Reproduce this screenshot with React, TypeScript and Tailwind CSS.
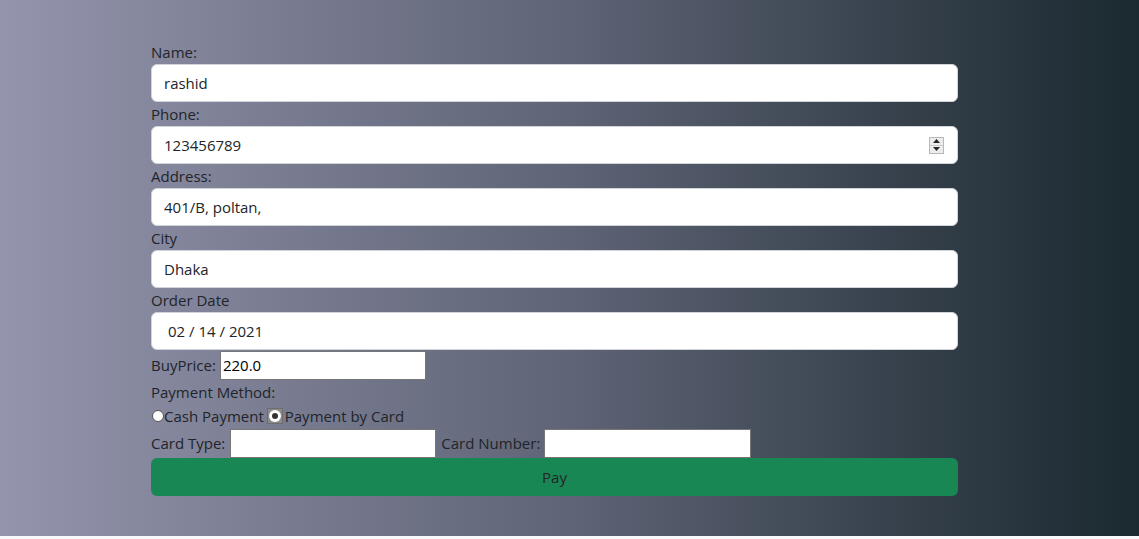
import React from 'react';

const font = { fontFamily: '"Open Sans", "Noto Sans", sans-serif' };

function Field({ label, value, children }: { label: string; value: string; children?: React.ReactNode }) {
  return (
    <div>
      <div className="h-6 text-[15px] leading-6 text-[#212529]">{label}</div>
      <div className="h-[38px] rounded-[6px] border border-[#ced4da] bg-white px-3 flex items-center justify-between text-[15px] text-[#212529]">
        <span>{value}</span>
        {children}
      </div>
    </div>
  );
}

function Spinner() {
  return (
    <div className="w-[15px] h-[17px] mr-[1px] border border-[#b8b8b8] bg-[#ececec] flex flex-col">
      <div className="flex-1 flex items-center justify-center border-b border-[#c8c8c8]">
        <svg width="7" height="4" viewBox="0 0 7 4"><path d="M0 4 L3.5 0 L7 4 Z" fill="#222" /></svg>
      </div>
      <div className="flex-1 flex items-center justify-center">
        <svg width="7" height="4" viewBox="0 0 7 4"><path d="M0 0 L3.5 4 L7 0 Z" fill="#222" /></svg>
      </div>
    </div>
  );
}

export default function App() {
  return (
    <div className="w-[1139px] h-[539px] bg-[#f8f9fa]" style={font}>
      <div className="h-[536px] bg-gradient-to-r from-[#9495ad] via-[#5f6476] to-[#1b2930] pt-10">
        <div className="ml-[151px] w-[807px]">
          <Field label="Name:" value="rashid" />
          <Field label="Phone:" value="123456789">
            <Spinner />
          </Field>
          <Field label="Address:" value="401/B, poltan," />
          <Field label="City" value="Dhaka" />
          <div>
            <div className="h-6 text-[15px] leading-6 text-[#212529]">Order Date</div>
            <div className="h-[38px] rounded-[6px] border border-[#ced4da] bg-white pl-4 flex items-center text-[15px] text-[#212529]">
              02 / 14 / 2021
            </div>
          </div>

          <div className="h-[30px] flex items-center text-[15px] text-[#212529]">
            <span>BuyPrice:</span>
            <div className="ml-[4px] w-[206px] h-[29px] border border-[#767676] bg-white flex items-center pl-[2px] text-black">220.0</div>
          </div>

          <div className="h-6 leading-6 text-[15px] text-[#212529]">Payment Method:</div>

          <div className="h-6 flex items-center text-[15px] text-[#212529]">
            <span className="w-[12px] h-[12px] rounded-full bg-white border border-[#555] ml-[1px]" />
            <span>Cash Payment</span>
            <span className="ml-[3px] w-[16px] h-[16px] bg-[#8a8a8a] border border-[#6d6d6d] flex items-center justify-center">
              <span className="w-[12px] h-[12px] rounded-full bg-white flex items-center justify-center">
                <span className="w-[6px] h-[6px] rounded-full bg-[#333]" />
              </span>
            </span>
            <span className="ml-[2px]">Payment by Card</span>
          </div>

          <div className="h-[30px] flex items-center text-[15px] text-[#212529]">
            <span>Card Type:</span>
            <div className="ml-[5px] w-[206px] h-[29px] border border-[#767676] bg-white" />
            <span className="ml-[5px]">Card Number:</span>
            <div className="ml-[4px] w-[207px] h-[29px] border border-[#767676] bg-white" />
          </div>

          <button className="w-full h-[38px] rounded-[6px] bg-[#198754] text-[15px] text-[#212529] flex items-center justify-center">
            Pay
          </button>
        </div>
      </div>
    </div>
  );
}
